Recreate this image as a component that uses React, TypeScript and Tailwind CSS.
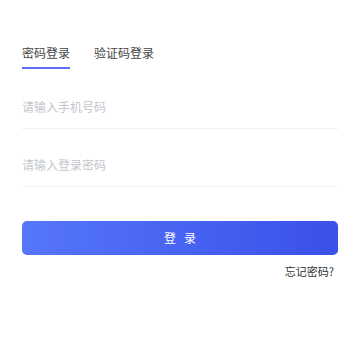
import React, { useState } from 'react'

const TABS = ['密码登录', '验证码登录']

export default function App() {
  const [active, setActive] = useState(0)

  return (
    <div
      className="w-[360px] h-[360px] bg-white px-[22px] pt-[44px]"
      style={{ fontFamily: '"Noto Sans CJK SC", "Noto Sans", sans-serif' }}
    >
      {/* Tabs */}
      <div className="flex gap-[24px]">
        {TABS.map((tab, idx) => (
          <button
            key={tab}
            onClick={() => setActive(idx)}
            className="flex flex-col items-stretch"
          >
            <span className="text-[12px] leading-[17px] text-[#444]">{tab}</span>
            <span
              className={
                idx === active
                  ? 'mt-[6px] h-[2px] bg-[#5b6ff7]'
                  : 'mt-[6px] h-[2px] bg-transparent'
              }
            />
          </button>
        ))}
      </div>

      {/* Inputs */}
      <input
        className="mt-[16px] block w-full h-[44px] border-b border-[#f0f0f0] text-[12px] text-[#333] placeholder:text-[#c4c6cc] outline-none"
        placeholder="请输入手机号码"
      />
      <input
        type="password"
        className="mt-[14px] block w-full h-[44px] border-b border-[#f0f0f0] text-[12px] text-[#333] placeholder:text-[#c4c6cc] outline-none"
        placeholder="请输入登录密码"
      />

      {/* Submit */}
      <button className="mt-[34px] w-full h-[34px] rounded-[5px] bg-gradient-to-r from-[#5676fb] to-[#3a50e8] text-white text-[12px] tracking-[8px] pl-[8px]">
        登录
      </button>

      <div className="mt-[8px] flex justify-end pr-[4px]">
        <span className="text-[11px] leading-[16px] text-[#333]">忘记密码?</span>
      </div>
    </div>
  )
}
